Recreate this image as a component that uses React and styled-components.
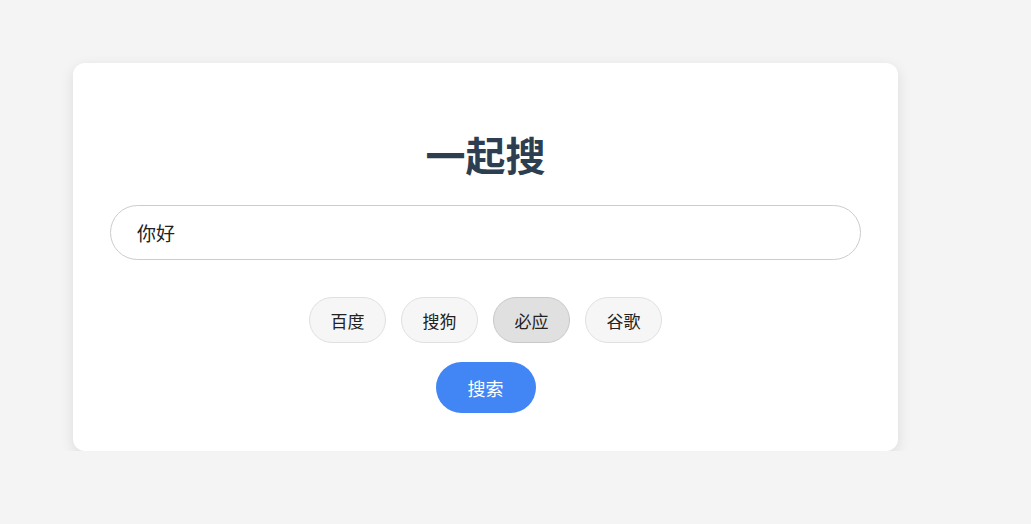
import React, { useState } from "react";
import styled, { createGlobalStyle } from "styled-components";

const GlobalStyle = createGlobalStyle`
  html, body {
    margin: 0;
    padding: 0;
    background: #f4f4f4;
    font-family: "Noto Sans CJK SC", "Noto Sans", sans-serif;
  }
`;

const engines = ["百度", "搜狗", "必应", "谷歌"];

const App = () => {
  const [query, setQuery] = useState("你好");
  const [engine, setEngine] = useState("必应");

  return (
    <>
      <GlobalStyle />
      <Page>
        <Card>
          <Title>一起搜</Title>
          <SearchInput
            value={query}
            onChange={(e) => setQuery(e.target.value)}
          />
          <EngineRow>
            {engines.map((name) => (
              <EngineButton
                key={name}
                $active={engine === name}
                onClick={() => setEngine(name)}
              >
                {name}
              </EngineButton>
            ))}
          </EngineRow>
          <SearchButton>搜索</SearchButton>
        </Card>
      </Page>
    </>
  );
};

const Page = styled.div`
  padding: 63px 0 0 73px;
`;

const Card = styled.div`
  width: 825px;
  box-sizing: border-box;
  background: #fff;
  border-radius: 12px;
  box-shadow: 0 4px 14px rgba(0, 0, 0, 0.1);
  padding: 67px 37px 38px 37px;
  display: flex;
  flex-direction: column;
  align-items: center;
`;

const Title = styled.h1`
  margin: 0 0 27px;
  font-size: 40px;
  line-height: 48px;
  font-weight: 700;
  color: #2c3e50;
`;

const SearchInput = styled.input`
  width: 100%;
  height: 55px;
  box-sizing: border-box;
  border: 1px solid #ccc;
  border-radius: 28px;
  padding: 0 26px;
  font-size: 19px;
  font-family: inherit;
  color: #222;
  outline: none;
`;

const EngineRow = styled.div`
  display: flex;
  gap: 15px;
  margin-top: 37px;
`;

const EngineButton = styled.button`
  width: 77px;
  height: 46px;
  box-sizing: border-box;
  border-radius: 23px;
  border: 1px solid ${(p) => (p.$active ? "#c8c8c8" : "#e0e0e0")};
  background: ${(p) => (p.$active ? "#e0e0e0" : "#f6f6f6")};
  font-family: inherit;
  font-size: 17px;
  color: #222;
  cursor: pointer;
  padding: 0;
`;

const SearchButton = styled.button`
  margin-top: 19px;
  width: 100px;
  height: 51px;
  border: none;
  border-radius: 26px;
  background: #4285f4;
  color: #fff;
  font-family: inherit;
  font-size: 18px;
  cursor: pointer;
`;

export default App;
